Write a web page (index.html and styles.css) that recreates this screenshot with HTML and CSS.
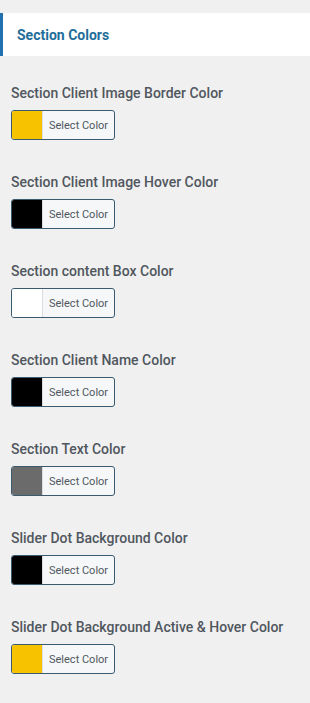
FILE: index.html
```html
<!DOCTYPE html>
<html>
<head>
<meta charset="utf-8">
<link rel="stylesheet" href="styles.css">
</head>
<body>
<div class="header"><span class="header-title">Section Colors</span></div>
<div class="fields">
  <div class="field">
    <div class="label">Section Client Image Border Color</div>
    <button class="picker"><span class="swatch sw-yellow"></span><span class="picker-text">Select Color</span></button>
  </div>
  <div class="field">
    <div class="label">Section Client Image Hover Color</div>
    <button class="picker"><span class="swatch sw-black"></span><span class="picker-text">Select Color</span></button>
  </div>
  <div class="field">
    <div class="label">Section content Box Color</div>
    <button class="picker"><span class="swatch sw-white"></span><span class="picker-text">Select Color</span></button>
  </div>
  <div class="field">
    <div class="label">Section Client Name Color</div>
    <button class="picker"><span class="swatch sw-black"></span><span class="picker-text">Select Color</span></button>
  </div>
  <div class="field">
    <div class="label">Section Text Color</div>
    <button class="picker"><span class="swatch sw-gray"></span><span class="picker-text">Select Color</span></button>
  </div>
  <div class="field">
    <div class="label">Slider Dot Background Color</div>
    <button class="picker"><span class="swatch sw-black"></span><span class="picker-text">Select Color</span></button>
  </div>
  <div class="field">
    <div class="label">Slider Dot Background Active &amp; Hover Color</div>
    <button class="picker"><span class="swatch sw-yellow"></span><span class="picker-text">Select Color</span></button>
  </div>
</div>
</body>
</html>
```
FILE: styles.css
```css
html, body {
  margin: 0;
  padding: 0;
  background: #f0f0f1;
  font-family: Roboto, "Liberation Sans", Arial, sans-serif;
}
.header {
  margin-top: 13px;
  height: 43px;
  background: #fff;
  border-left: 3px solid #2271b1;
  display: flex;
  align-items: center;
  padding-left: 14px;
}
.header-title {
  color: #1f6e9a;
  font-size: 14px;
  font-weight: 700;
}
.fields {
  display: flex;
  flex-direction: column;
  gap: 32px;
  padding: 27px 11px;
}
.field {
  display: flex;
  flex-direction: column;
  align-items: flex-start;
  gap: 7px;
}
.label {
  color: #50575e;
  font-size: 14px;
  font-weight: 500;
  line-height: 20px;
}
.picker {
  display: flex;
  align-items: stretch;
  width: 104px;
  height: 30px;
  padding: 0;
  margin: 0;
  border: 1px solid #3a5a70;
  border-radius: 3px;
  background: #f5f7f8;
  overflow: hidden;
  font-family: inherit;
  cursor: pointer;
}
.swatch {
  width: 30px;
  border-right: 1px solid #dcdcde;
}
.sw-yellow { background: #f7c300; }
.sw-black { background: #000; }
.sw-white { background: #fff; }
.sw-gray { background: #6b6b6b; }
.picker-text {
  flex: 1;
  display: flex;
  align-items: center;
  padding-left: 6px;
  color: #50575e;
  font-size: 11px;
}
```
